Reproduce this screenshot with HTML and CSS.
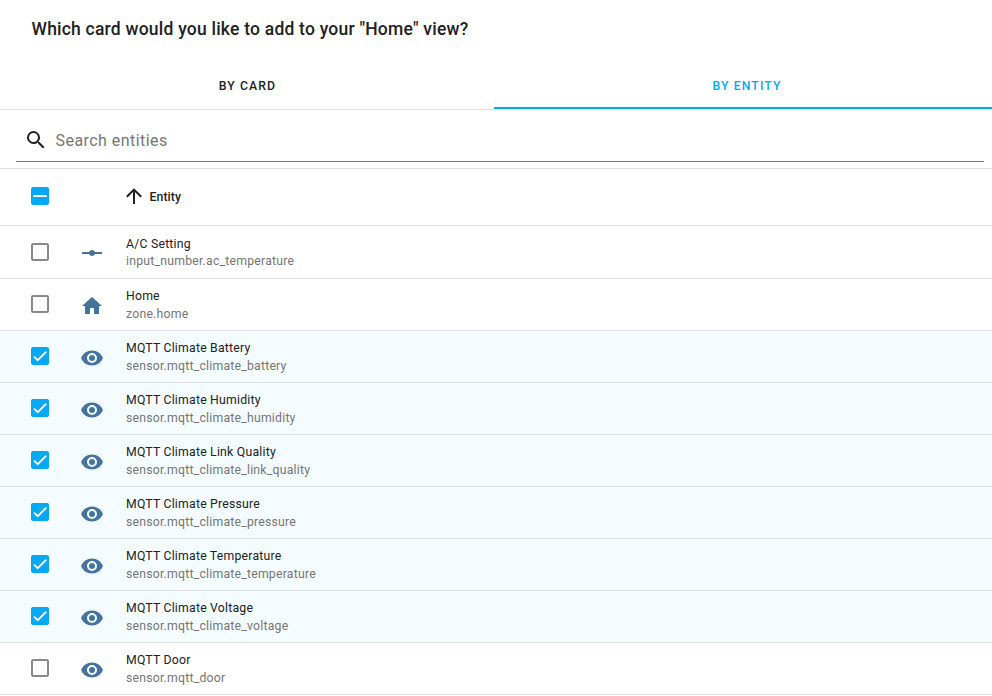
FILE: index.html
```html
<!DOCTYPE html>
<html lang="en">
<head>
<meta charset="utf-8">
<title>Add card</title>
<link rel="stylesheet" href="styles.css">
</head>
<body>
<svg class="defs" width="0" height="0">
<symbol id="eye" viewBox="0 0 24 24"><path d="M12,9A3,3 0 0,0 9,12A3,3 0 0,0 12,15A3,3 0 0,0 15,12A3,3 0 0,0 12,9M12,17A5,5 0 0,1 7,12A5,5 0 0,1 12,7A5,5 0 0,1 17,12A5,5 0 0,1 12,17M12,4.5C7,4.5 2.73,7.61 1,12C2.73,16.39 7,19.5 12,19.5C17,19.5 21.27,16.39 23,12C21.27,7.61 17,4.5 12,4.5Z"/></symbol>
<symbol id="home" viewBox="0 0 24 24"><path d="M10,20V14H14V20H19V12H22L12,3L2,12H5V20H10Z"/></symbol>
<symbol id="slider" viewBox="0 0 24 24"><path d="M2,11H9.17C9.58,9.83 10.69,9 12,9C13.31,9 14.42,9.83 14.83,11H22V13H14.83C14.42,14.17 13.31,15 12,15C10.69,15 9.58,14.17 9.17,13H2V11Z"/></symbol>
<symbol id="check" viewBox="0 0 24 24"><path d="M1.73,12.91 8.1,19.28 22.79,4.59" fill="none" stroke="#fff" stroke-width="3.12"/></symbol>
</svg>
<h1>Which card would you like to add to your "Home" view?</h1>
<nav class="tabs"><div class="tab">BY CARD</div><div class="tab active">BY ENTITY</div></nav>
<div class="search-area"><div class="search">
<svg class="icon" viewBox="0 0 24 24"><path d="M9.5,3A6.5,6.5 0 0,1 16,9.5C16,11.11 15.41,12.59 14.44,13.73L14.71,14H15.5L20.5,19L19,20.5L14,15.5V14.71L13.73,14.44C12.59,15.41 11.11,16 9.5,16A6.5,6.5 0 0,1 3,9.5A6.5,6.5 0 0,1 9.5,3M9.5,5C7,5 5,7 5,9.5C5,12 7,14 9.5,14C12,14 14,12 14,9.5C14,7 12,5 9.5,5Z"/></svg>
<span>Search entities</span></div></div>
<main>
<div class="head"><div class="box mixed"></div><svg class="icon arrow" viewBox="0 0 24 24"><path d="M13,20H11V8L5.5,13.5L4.08,12.08L12,4.16L19.92,12.08L18.5,13.5L13,8V20Z"/></svg><b>Entity</b></div>
<div class="row"><div class="box"></div><svg class="icon"><use href="#slider"/></svg><div class="text">A/C Setting<small>input_number.ac_temperature</small></div></div>
<div class="row"><div class="box"></div><svg class="icon"><use href="#home"/></svg><div class="text">Home<small>zone.home</small></div></div>
<div class="row on"><div class="box"><svg><use href="#check"/></svg></div><svg class="icon"><use href="#eye"/></svg><div class="text">MQTT Climate Battery<small>sensor.mqtt_climate_battery</small></div></div>
<div class="row on"><div class="box"><svg><use href="#check"/></svg></div><svg class="icon"><use href="#eye"/></svg><div class="text">MQTT Climate Humidity<small>sensor.mqtt_climate_humidity</small></div></div>
<div class="row on"><div class="box"><svg><use href="#check"/></svg></div><svg class="icon"><use href="#eye"/></svg><div class="text">MQTT Climate Link Quality<small>sensor.mqtt_climate_link_quality</small></div></div>
<div class="row on"><div class="box"><svg><use href="#check"/></svg></div><svg class="icon"><use href="#eye"/></svg><div class="text">MQTT Climate Pressure<small>sensor.mqtt_climate_pressure</small></div></div>
<div class="row on"><div class="box"><svg><use href="#check"/></svg></div><svg class="icon"><use href="#eye"/></svg><div class="text">MQTT Climate Temperature<small>sensor.mqtt_climate_temperature</small></div></div>
<div class="row on"><div class="box"><svg><use href="#check"/></svg></div><svg class="icon"><use href="#eye"/></svg><div class="text">MQTT Climate Voltage<small>sensor.mqtt_climate_voltage</small></div></div>
<div class="row"><div class="box"></div><svg class="icon"><use href="#eye"/></svg><div class="text">MQTT Door<small>sensor.mqtt_door</small></div></div>
</main>
</body>
</html>
```
FILE: styles.css
```css
* { box-sizing: border-box; }
body { margin: 0; height: 696px; overflow: hidden; background: #fff; color: #212121; font-family: Roboto, sans-serif; }
.defs { display: none; }
h1 { margin: 0; height: 61px; padding: 13px 31.5px 0; font-size: 17.5px; line-height: 32px; font-weight: 500; letter-spacing: .0125em; }
.tabs { display: flex; height: 49px; border-bottom: 1px solid #e0e0e0; }
.tab { width: 494px; height: 48px; padding-left: 1px; line-height: 50px; text-align: center; font-size: 12.25px; font-weight: 500; letter-spacing: .0892857em; }
.tab.active { width: 498px; padding-left: 8px; color: #03a9f4; border-bottom: 2px solid #03a9f4; }
.search-area { height: 59px; padding: 8px 8px 0 16px; border-bottom: 1px solid #e0e0e0; }
.search { height: 44px; border-bottom: 1px solid #727272; display: flex; align-items: center; padding-left: 8px; color: #757575; font-size: 16px; letter-spacing: .45px; }
.search span { padding-top: 2px; }
.icon { width: 24px; height: 24px; flex: none; fill: #44739e; }
.search .icon { fill: #212121; margin-right: 7.5px; }
.head { height: 56px; display: flex; align-items: center; padding: 0 0 2px 31px; font-size: 12.25px; }
.head b { font-weight: 500; letter-spacing: .0071em; margin-left: 3.5px; padding-top: 1px; }
.head .arrow { fill: #212121; margin-left: 73px; }
.row { height: 52px; border-top: 1px solid #e0e0e0; display: flex; padding-left: 31px; }
.head + .row { height: 53px; }
.row:last-child { height: 53px; border-bottom: 1px solid #e0e0e0; }
.row.on { background: #f5fcff; }
.box { width: 18px; height: 18px; border: 2px solid #888; border-radius: 2px; flex: none; }
.row .box { margin-top: 16px; }
.head + .row .box { margin-top: 17px; }
.on .box, .mixed { border: 0; background: #03a9f4; }
.box svg { width: 18px; height: 18px; display: block; padding: 2px; }
.mixed { display: flex; align-items: center; justify-content: center; }
.mixed::before { content: ""; width: 14px; height: 2px; background: #fff; }
.row .icon { margin: 15px 22px 0 31px; }
.text { font-size: 12.25px; line-height: 18px; letter-spacing: .0178571em; padding-top: 8px; }
.head + .row .text { padding-top: 9px; }
.head + .row small { margin-top: -1px; }
small { display: block; font-size: 12.25px; line-height: 18px; color: #757575; }
```
